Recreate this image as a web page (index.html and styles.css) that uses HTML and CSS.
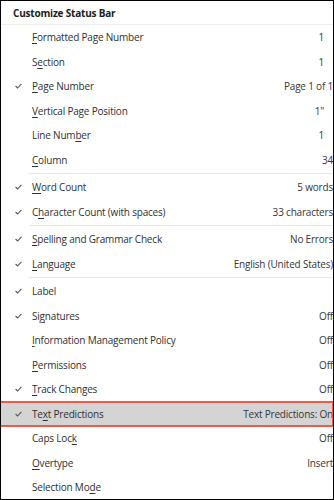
FILE: index.html
```html
<!DOCTYPE html>
<html lang="en">
<head>
  <meta charset="UTF-8">
  <meta name="viewport" content="width=device-width, initial-scale=1">
  <title>Customize Status Bar</title>
  <link rel="stylesheet" href="styles.css">
</head>
<body>
  <div class="menu">
    <div class="menu-title">Customize Status Bar</div>

    <ul class="menu-list">
      <li class="item"><span class="check"></span><span class="label"><u>F</u>ormatted Page Number</span><span class="value value-short">1</span></li>
      <li class="item"><span class="check"></span><span class="label">S<u>e</u>ction</span><span class="value value-short">1</span></li>
      <li class="item is-on"><span class="check"></span><span class="label"><u>P</u>age Number</span><span class="value">Page 1 of 1</span></li>
      <li class="item"><span class="check"></span><span class="label"><u>V</u>ertical Page Position</span><span class="value value-short">1"</span></li>
      <li class="item"><span class="check"></span><span class="label">Line Num<u>b</u>er</span><span class="value value-short">1</span></li>
      <li class="item"><span class="check"></span><span class="label"><u>C</u>olumn</span><span class="value">34</span></li>
      <li class="sep"></li>
      <li class="item is-on"><span class="check"></span><span class="label"><u>W</u>ord Count</span><span class="value">5 words</span></li>
      <li class="item is-on"><span class="check"></span><span class="label">C<u>h</u>aracter Count (with spaces)</span><span class="value">33 characters</span></li>
      <li class="sep"></li>
      <li class="item is-on"><span class="check"></span><span class="label"><u>S</u>pelling and Grammar Check</span><span class="value">No Errors</span></li>
      <li class="item is-on"><span class="check"></span><span class="label"><u>L</u>anguage</span><span class="value">English (United States)</span></li>
      <li class="sep"></li>
      <li class="item is-on"><span class="check"></span><span class="label">Label</span><span class="value"></span></li>
      <li class="item is-on"><span class="check"></span><span class="label">Si<u>g</u>natures</span><span class="value">Off</span></li>
      <li class="item"><span class="check"></span><span class="label"><u>I</u>nformation Management Policy</span><span class="value">Off</span></li>
      <li class="item"><span class="check"></span><span class="label"><u>P</u>ermissions</span><span class="value">Off</span></li>
      <li class="item is-on"><span class="check"></span><span class="label"><u>T</u>rack Changes</span><span class="value">Off</span></li>
      <li class="item is-on is-active"><span class="check"></span><span class="label">Te<u>x</u>t Predictions</span><span class="value">Text Predictions: On</span></li>
      <li class="item"><span class="check"></span><span class="label">Caps Loc<u>k</u></span><span class="value">Off</span></li>
      <li class="item"><span class="check"></span><span class="label"><u>O</u>vertype</span><span class="value">Insert</span></li>
      <li class="item"><span class="check"></span><span class="label">Selection Mo<u>d</u>e</span><span class="value"></span></li>
    </ul>
  </div>
</body>
</html>
```

FILE: styles.css
```css
body {
  margin: 0;
  font-family: 'Open Sans', 'Noto Sans', sans-serif;
  font-size: 10px;
  letter-spacing: -0.2px;
  color: #303030;
  background: #fff;
}

.menu {
  width: 334px;
  height: 500px;
  box-sizing: border-box;
  border: 1px solid #000;
  overflow: hidden;
  background: #fff;
}

.menu-title {
  height: 21px;
  line-height: 21px;
  padding: 2px 0 0 12px;
  font-size: 10px;
  font-weight: 700;
  letter-spacing: -0.2px;
  color: #1c1c1c;
  border-bottom: 1px solid #ececec;
}

.menu-list {
  list-style: none;
  margin: 0;
  padding: 0;
}

.item {
  display: flex;
  align-items: center;
  height: 24.5px;
}

.check {
  width: 31px;
  flex: none;
}

.is-on .check {
  height: 6px;
  background: no-repeat 14px 0 / 7px 6px url("data:image/svg+xml,%3Csvg xmlns='http://www.w3.org/2000/svg' viewBox='0 0 7 6'%3E%3Cpolyline points='0.6,3 2.6,5 6.4,0.8' fill='none' stroke='%23555' stroke-width='1.1'/%3E%3C/svg%3E");
}

.label {
  flex: 1;
  white-space: nowrap;
}

.label u {
  text-underline-offset: 2px;
}

.value {
  white-space: nowrap;
  color: #363636;
}

.value-short {
  padding-right: 9px;
}

.sep {
  height: 1px;
  margin: 1px 0 1px 28px;
  background: #e8e8e8;
}

.is-active {
  background: #d4d4d4;
  outline: 2px solid #f0594b;
  outline-offset: -1px;
  margin-left: -1px;
  padding-left: 1px;
}
```
